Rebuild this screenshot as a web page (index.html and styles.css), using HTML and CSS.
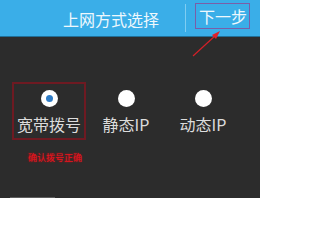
FILE: index.html
```html
<!DOCTYPE html>
<html lang="zh">
<head>
<meta charset="utf-8">
<link rel="stylesheet" href="styles.css">
</head>
<body>
<div class="screen">
  <header class="topbar">
    <div class="title">上网方式选择</div>
    <div class="divider"></div>
    <div class="next">下一步</div>
  </header>
  <main class="content">
    <div class="options">
      <div class="option highlighted">
        <span class="radio checked"><span class="dot"></span></span>
        <span class="label">宽带拨号</span>
      </div>
      <div class="option">
        <span class="radio"></span>
        <span class="label">静态IP</span>
      </div>
      <div class="option">
        <span class="radio"></span>
        <span class="label">动态IP</span>
      </div>
    </div>
    <div class="note">确认拨号正确</div>
    <div class="scroll"></div>
  </main>
  <footer class="footer"></footer>
  <svg class="arrow" width="260" height="70" viewBox="0 0 260 70">
    <line x1="193" y1="56" x2="216" y2="35" stroke="#d42028" stroke-width="1.2"/>
    <polygon points="220,31 212,35 216,39" fill="#e0202a"/>
  </svg>
</div>
</body>
</html>
```
FILE: styles.css
```css
html, body {
  margin: 0;
  padding: 0;
  background: #ffffff;
}
.screen {
  position: relative;
  width: 260px;
  height: 212px;
  overflow: hidden;
  font-family: "Noto Sans CJK SC", "Noto Sans", sans-serif;
}
.topbar {
  height: 36px;
  background: #3aaee8;
  border-bottom: 1px solid #1f6f98;
  display: flex;
  align-items: center;
  color: #eef8fd;
}
.title {
  margin-left: 63px;
  font-size: 16px;
  line-height: 20px;
  margin-top: 1px;
}
.divider {
  width: 1px;
  height: 28px;
  background: #7fcdf2;
  margin-left: 26px;
}
.next {
  margin-left: 9px;
  align-self: flex-start;
  margin-top: 3px;
  border: 1px solid #7a5ea8;
  padding: 2px 2px 2px 3px;
  font-size: 16px;
  line-height: 20px;
  width: 48px;
}
.content {
  height: 161px;
  background: #2c2c2c;
  display: flex;
  flex-direction: column;
}
.options {
  display: flex;
  margin-top: 45px;
  padding-left: 12px;
  gap: 3px;
}
.option {
  width: 70px;
  border: 2px solid transparent;
  display: flex;
  flex-direction: column;
  align-items: center;
  padding: 6px 0 4px;
}
.option.highlighted {
  border-color: #6e1a22;
}
.radio {
  width: 17px;
  height: 17px;
  border-radius: 50%;
  background: #ffffff;
  display: flex;
  align-items: center;
  justify-content: center;
}
.dot {
  width: 7px;
  height: 7px;
  border-radius: 50%;
  background: #2f7cc6;
}
.label {
  margin-top: 7px;
  font-size: 16px;
  line-height: 20px;
  color: #dcdcdc;
}
.note {
  margin-top: 13px;
  margin-left: 28px;
  font-size: 9px;
  line-height: 10px;
  color: #e8141e;
  text-shadow: 0 0 2px #c01018;
}
.scroll {
  margin-top: auto;
  margin-left: 10px;
  width: 45px;
  height: 1px;
  background: #5e5e5e;
}
.footer {
  height: 14px;
  background: #ffffff;
}
.arrow {
  position: absolute;
  left: 0;
  top: 0;
}
```
